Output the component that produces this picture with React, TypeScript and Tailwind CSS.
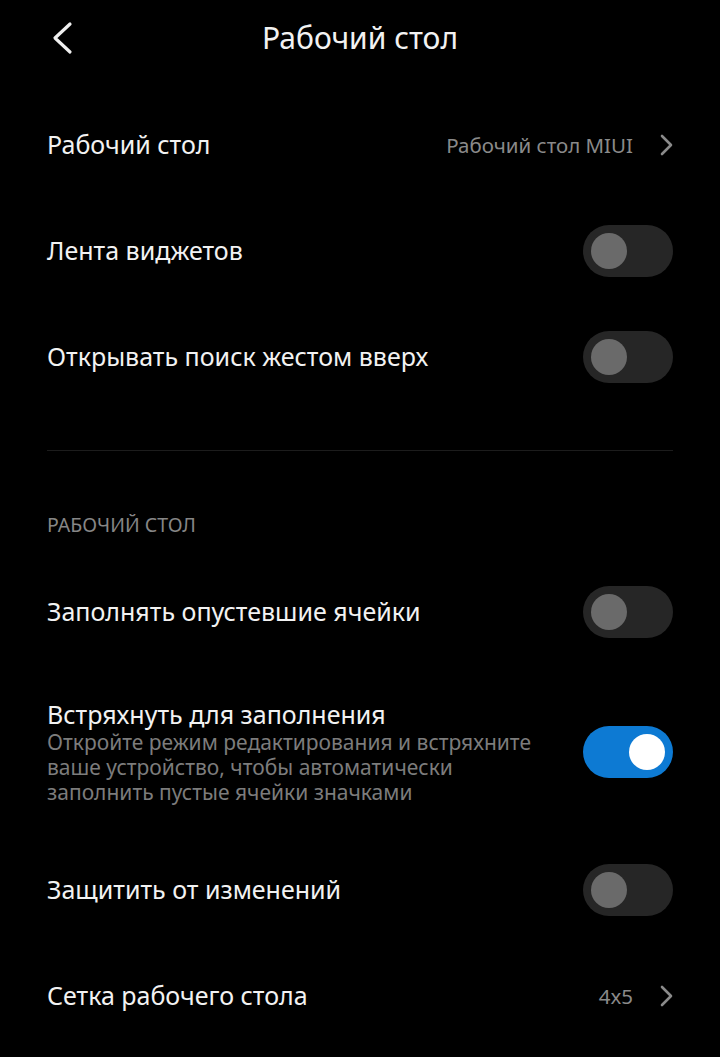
import React, { useState } from "react";

function Chevron({ className }: { className?: string }) {
  return (
    <svg width="14" height="22" viewBox="0 0 14 22" className={className}>
      <path d="M3 2 L12 11 L3 20" fill="none" stroke="currentColor" strokeWidth="2.6" strokeLinecap="round" strokeLinejoin="round" />
    </svg>
  );
}

function Toggle({ on, onClick }: { on: boolean; onClick: () => void }) {
  return (
    <button
      onClick={onClick}
      className={`relative shrink-0 w-[90px] h-[52px] rounded-full ${on ? "bg-[#0d7ad3]" : "bg-[#262626]"}`}
    >
      <span
        className={`absolute top-[8px] w-[36px] h-[36px] rounded-full ${on ? "left-[46px] bg-white" : "left-[8px] bg-[#6a6a6a]"}`}
      />
    </button>
  );
}

function ToggleRow({ label, sub, on, onClick }: { label: string; sub?: string; on: boolean; onClick: () => void }) {
  if (sub) {
    return (
      <div className="flex items-center justify-between pt-[33px] pb-[32px]">
        <div className="flex flex-col pr-6">
          <span className="text-[25px] leading-[32px] text-[#f2f2f2]">{label}</span>
          <span className="text-[21px] leading-[25px] text-[#7c7c7c] max-w-[500px]">{sub}</span>
        </div>
        <Toggle on={on} onClick={onClick} />
      </div>
    );
  }
  return (
    <div className="flex items-center justify-between h-[106px]">
      <span className="text-[25px] text-[#f2f2f2]">{label}</span>
      <Toggle on={on} onClick={onClick} />
    </div>
  );
}

function LinkRow({ label, value }: { label: string; value: string }) {
  return (
    <div className="flex items-center justify-between h-[106px]">
      <span className="text-[25px] text-[#f2f2f2]">{label}</span>
      <div className="flex items-center gap-[26px] text-[#8a8a8a]">
        <span className="text-[20.5px]">{value}</span>
        <Chevron />
      </div>
    </div>
  );
}

export default function App() {
  const [t, setT] = useState({ feed: false, search: false, fill: false, shake: true, lock: false });
  const flip = (k: keyof typeof t) => setT({ ...t, [k]: !t[k] });

  return (
    <div className="min-h-screen w-[720px] bg-black text-white" style={{ fontFamily: '"Noto Sans", "Open Sans", sans-serif' }}>
      {/* Header */}
      <div className="relative h-[74px] flex items-center justify-center">
        <button className="absolute left-[50px] top-[21px] text-[#efefef]">
          <svg width="24" height="34" viewBox="0 0 24 34">
            <path d="M20 3 L5 17 L20 31" fill="none" stroke="currentColor" strokeWidth="3.2" strokeLinecap="round" strokeLinejoin="round" />
          </svg>
        </button>
        <h1 className="text-[30px] text-[#f2f2f2]">Рабочий стол</h1>
      </div>

      <div className="px-[47px] pt-[18px]">
        <LinkRow label="Рабочий стол" value="Рабочий стол MIUI" />
        <ToggleRow label="Лента виджетов" on={t.feed} onClick={() => flip("feed")} />
        <ToggleRow label="Открывать поиск жестом вверх" on={t.search} onClick={() => flip("search")} />

        <div className="mt-[40px] h-px bg-[#1c1c1c]" />

        {/* Section */}
        <div className="pt-[62px] pb-[22px] text-[19.5px] leading-[24px] text-[#868686]">РАБОЧИЙ СТОЛ</div>

        <ToggleRow label="Заполнять опустевшие ячейки" on={t.fill} onClick={() => flip("fill")} />
        <ToggleRow
          label="Встряхнуть для заполнения"
          sub="Откройте режим редактирования и встряхните ваше устройство, чтобы автоматически заполнить пустые ячейки значками"
          on={t.shake}
          onClick={() => flip("shake")}
        />
        <ToggleRow label="Защитить от изменений" on={t.lock} onClick={() => flip("lock")} />
        <LinkRow label="Сетка рабочего стола" value="4x5" />
      </div>
    </div>
  );
}
